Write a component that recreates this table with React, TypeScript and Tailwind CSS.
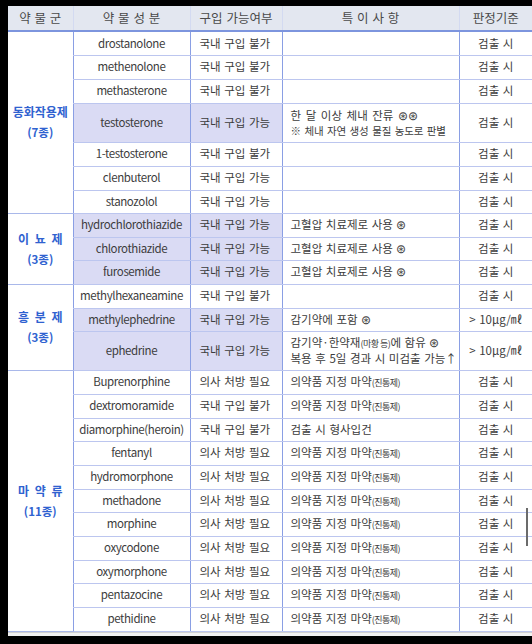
import type { ReactNode } from "react"

type Row = {
  name: string
  buy: string
  note?: ReactNode
  judge: ReactNode
  hl?: boolean
  h: string
}

type Group = { label: string; count: string; rows: Row[] }

const small = (t: string) => <span className="text-[9px] tracking-[-0.5px] [word-spacing:0px]">{t}</span>

const narcotic = <>의약품 지정 마약{small("(진통제)")}</>

const groups: Group[] = [
  {
    label: "동화작용제",
    count: "(7종)",
    rows: [
      { name: "drostanolone", buy: "국내 구입 불가", judge: "검출 시", h: "h-[24px]" },
      { name: "methenolone", buy: "국내 구입 불가", judge: "검출 시", h: "h-[24px]" },
      { name: "methasterone", buy: "국내 구입 불가", judge: "검출 시", h: "h-[24px]" },
      {
        name: "testosterone",
        buy: "국내 구입 가능",
        hl: true,
        h: "h-[39px]",
        note: (
          <div className="leading-[15px]">
            <div className="[word-spacing:2px]">한 달 이상 체내 잔류 ⊛⊛</div>
            <div className="text-[10.5px] tracking-[-0.2px] [word-spacing:1.5px]">※ 체내 자연 생성 물질 농도로 판별</div>
          </div>
        ),
        judge: "검출 시",
      },
      { name: "1-testosterone", buy: "국내 구입 불가", judge: "검출 시", h: "h-[24px]" },
      { name: "clenbuterol", buy: "국내 구입 가능", judge: "검출 시", h: "h-[24px]" },
      { name: "stanozolol", buy: "국내 구입 가능", judge: "검출 시", h: "h-[23px]" },
    ],
  },
  {
    label: "이 뇨 제",
    count: "(3종)",
    rows: [
      { name: "hydrochlorothiazide", buy: "국내 구입 가능", note: "고혈압 치료제로 사용 ⊛", judge: "검출 시", hl: true, h: "h-[24px]" },
      { name: "chlorothiazide", buy: "국내 구입 가능", note: "고혈압 치료제로 사용 ⊛", judge: "검출 시", hl: true, h: "h-[23px]" },
      { name: "furosemide", buy: "국내 구입 가능", note: "고혈압 치료제로 사용 ⊛", judge: "검출 시", hl: true, h: "h-[24px]" },
    ],
  },
  {
    label: "흥 분 제",
    count: "(3종)",
    rows: [
      { name: "methylhexaneamine", buy: "국내 구입 불가", judge: "검출 시", h: "h-[24px]" },
      { name: "methylephedrine", buy: "국내 구입 가능", note: "감기약에 포함 ⊛", judge: "> 10μg/㎖", hl: true, h: "h-[23px]" },
      {
        name: "ephedrine",
        buy: "국내 구입 가능",
        hl: true,
        h: "h-[39px]",
        note: (
          <div className="leading-[15px]">
            <div>감기약·한약재{small("(마황 등)")}에 함유 ⊛</div>
            <div>복용 후 5일 경과 시 미검출 가능↑</div>
          </div>
        ),
        judge: "> 10μg/㎖",
      },
    ],
  },
  {
    label: "마 약 류",
    count: "(11종)",
    rows: [
      { name: "Buprenorphine", buy: "의사 처방 필요", note: narcotic, judge: "검출 시", h: "h-[24px]" },
      { name: "dextromoramide", buy: "국내 구입 불가", note: narcotic, judge: "검출 시", h: "h-[24px]" },
      { name: "diamorphine(heroin)", buy: "국내 구입 불가", note: "검출 시 형사입건", judge: "검출 시", h: "h-[23px]" },
      { name: "fentanyl", buy: "의사 처방 필요", note: narcotic, judge: "검출 시", h: "h-[24px]" },
      { name: "hydromorphone", buy: "의사 처방 필요", note: narcotic, judge: "검출 시", h: "h-[24px]" },
      { name: "methadone", buy: "의사 처방 필요", note: narcotic, judge: "검출 시", h: "h-[23px]" },
      { name: "morphine", buy: "의사 처방 필요", note: narcotic, judge: "검출 시", h: "h-[24px]" },
      { name: "oxycodone", buy: "의사 처방 필요", note: narcotic, judge: "검출 시", h: "h-[24px]" },
      { name: "oxymorphone", buy: "의사 처방 필요", note: narcotic, judge: "검출 시", h: "h-[23px]" },
      { name: "pentazocine", buy: "의사 처방 필요", note: narcotic, judge: "검출 시", h: "h-[24px]" },
      { name: "pethidine", buy: "의사 처방 필요", note: narcotic, judge: "검출 시", h: "h-[24px]" },
    ],
  },
]

export default function App() {
  return (
    <div className="w-[532px] h-[644px] bg-black pt-[6px] pl-[8px] overflow-hidden font-['Noto_Sans_CJK_KR','Noto_Sans',sans-serif] text-[#3c3c3c]">
      <div className="relative bg-white">
        <table className="w-[524px] table-fixed border-collapse text-[11.5px]">
          <colgroup>
            <col className="w-[65px]" />
            <col className="w-[117px]" />
            <col className="w-[92px]" />
            <col className="w-[177px]" />
            <col className="w-[73px]" />
          </colgroup>
          <thead>
            <tr className="h-[25px] bg-[#e3e7f0] text-[12.5px] text-[#4a4a4a] [word-spacing:1px]">
              <th className="font-normal border-b-2 border-b-[#7d95de]">약 물 군</th>
              <th className="font-normal border-b-2 border-b-[#7d95de] border-l border-l-[#d3daf1]">약 물 성 분</th>
              <th className="font-normal border-b-2 border-b-[#7d95de] border-l border-l-[#d3daf1]">구입 가능여부</th>
              <th className="font-normal border-b-2 border-b-[#7d95de] border-l border-l-[#d3daf1]">특 이 사 항</th>
              <th className="font-normal border-b-2 border-b-[#7d95de] border-l border-l-[#d3daf1]">판정기준</th>
            </tr>
          </thead>
          <tbody>
            {groups.map((g) =>
              g.rows.map((r, i) => (
                <tr key={r.name} className={r.h}>
                  {i === 0 && (
                    <td
                      rowSpan={g.rows.length}
                      className="border-b border-b-[#a9b8ea] text-center font-bold text-[12px] leading-[20px] text-[#2f62d0]"
                    >
                      <div className="[word-spacing:3px]">{g.label}</div>
                      <div className="text-[11.5px]">{g.count}</div>
                    </td>
                  )}
                  <td
                    className={`border-l border-l-[#8a9fe4] border-b border-b-[#bcc6ef] text-center tracking-[-0.4px] ${r.hl ? "bg-[#dadbf4]" : ""}`}
                  >
                    {r.name}
                  </td>
                  <td
                    className={`border-l border-l-[#8a9fe4] border-b border-b-[#bcc6ef] pl-[9px] whitespace-nowrap [word-spacing:1px] ${r.hl ? "bg-[#dadbf4]" : ""}`}
                  >
                    {r.buy}
                  </td>
                  <td className="border-l border-l-[#8a9fe4] border-b border-b-[#bcc6ef] pl-[8px] whitespace-nowrap [word-spacing:1px]">
                    {r.note}
                  </td>
                  <td className="border-l border-l-[#8a9fe4] border-b border-b-[#bcc6ef] text-center whitespace-nowrap [word-spacing:1px]">
                    {r.judge}
                  </td>
                </tr>
              ))
            )}
          </tbody>
        </table>
        <div className="h-[4px] bg-[#f2f2f2] border-t border-t-[#d0d0d0]" />
        <div className="absolute right-[4px] top-[502px] w-[2px] h-[38px] bg-[#6b6b6b]" />
      </div>
    </div>
  )
}
